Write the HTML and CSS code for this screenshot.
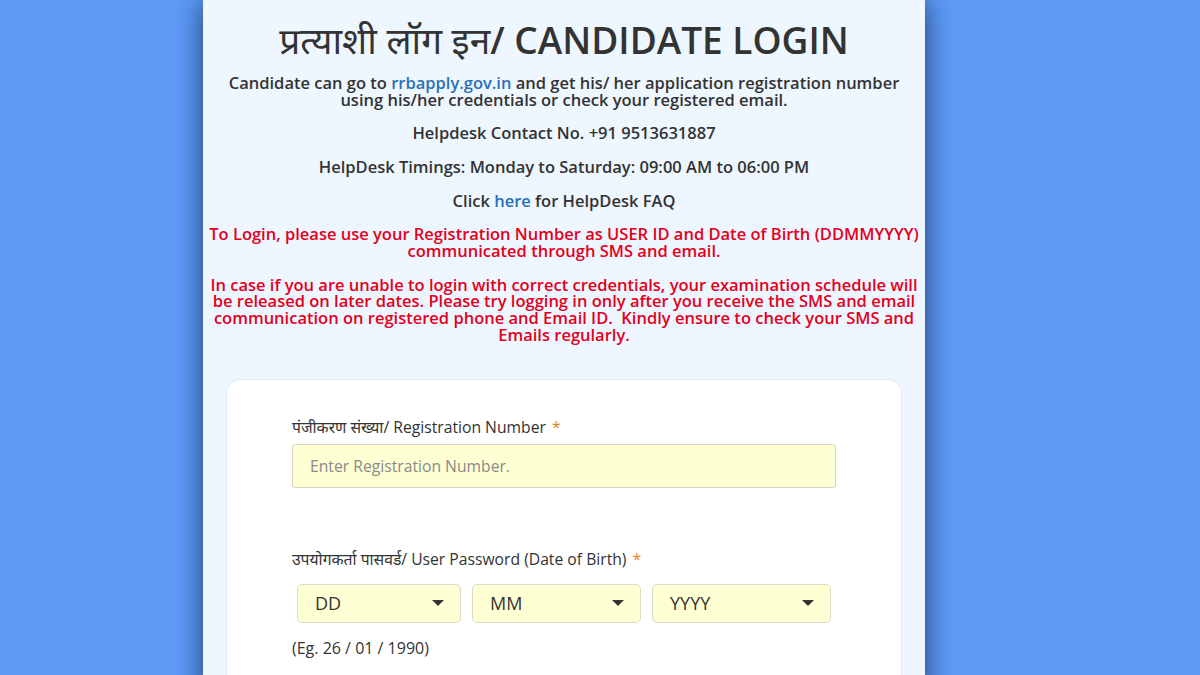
FILE: index.html
```html
<!DOCTYPE html>
<html lang="en">
<head>
<meta charset="utf-8">
<title>Candidate Login</title>
<link rel="stylesheet" href="styles.css">
</head>
<body>
<div class="stage">
  <main class="panel">
    <h1 class="title"><span class="hi">प्रत्याशी लॉग इन</span>/ CANDIDATE LOGIN</h1>
    <p class="info">Candidate can go to <a class="link" href="#">rrbapply.gov.in</a> and get his/ her application registration number<br>using his/her credentials or check your registered email.</p>
    <p class="info">Helpdesk Contact No. +91 9513631887</p>
    <p class="info">HelpDesk Timings: Monday to Saturday: 09:00 AM to 06:00 PM</p>
    <p class="info">Click <a class="link" href="#">here</a> for HelpDesk FAQ</p>
    <p class="warn">To Login, please use your Registration Number as USER ID and Date of Birth (DDMMYYYY)<br>communicated through SMS and email.</p>
    <p class="warn">In case if you are unable to login with correct credentials, your examination schedule will<br>be released on later dates. Please try logging in only after you receive the SMS and email<br>communication on registered phone and Email ID.&nbsp; Kindly ensure to check your SMS and<br>Emails regularly.</p>

    <section class="card">
      <div class="field">
        <label class="label">पंजीकरण संख्या/ Registration Number <span class="req">*</span></label>
        <div class="input">Enter Registration Number.</div>
      </div>
      <div class="field field-dob">
        <label class="label">उपयोगकर्ता पासवर्ड/ User Password (Date of Birth) <span class="req">*</span></label>
        <div class="selects">
          <div class="select sel-dd"><span>DD</span><span class="caret"></span></div>
          <div class="select sel-mm"><span>MM</span><span class="caret"></span></div>
          <div class="select sel-yy"><span>YYYY</span><span class="caret"></span></div>
        </div>
        <div class="hint">(Eg. 26 / 01 / 1990)</div>
      </div>
    </section>
  </main>
</div>
</body>
</html>
```

FILE: styles.css
```css
html, body {
  margin: 0;
  padding: 0;
}
body {
  background: #5f9cf8;
  font-family: "Open Sans", "Noto Sans", "Noto Sans Devanagari", sans-serif;
  color: #333;
  height: 675px;
  overflow: hidden;
}
.stage {
  padding-left: 203px;
}
.panel {
  width: 722px;
  height: 700px;
  background: #eef6ff;
  box-shadow: 0 0 28px rgba(10, 30, 70, 0.75);
  box-sizing: border-box;
  padding: 17px 4px 0;
  text-align: center;
}
.title {
  margin: 0 0 12px;
  font-size: 37px;
  line-height: 46px;
  font-weight: 600;
  color: #333;
}
.title .hi {
  font-weight: 400;
}
.info {
  margin: 0 0 16.8px;
  font-size: 16.5px;
  line-height: 16.8px;
  font-weight: 600;
  color: #333;
}
.link {
  color: #2a70b8;
  text-decoration: none;
}
.warn {
  margin: 0 0 16.8px;
  font-size: 16.5px;
  line-height: 16.8px;
  font-weight: 600;
  color: #e4001b;
}
.card {
  margin: 35px 19px 0 19px;
  background: #fff;
  border: 1px solid #e3e8ee;
  border-radius: 14px;
  padding: 37px 65px 0;
  height: 400px;
  text-align: left;
}
.field {
  display: flex;
  flex-direction: column;
}
.label {
  font-size: 15.7px;
  line-height: 20px;
  color: #333;
  margin-bottom: 7px;
}
.req {
  color: #e8822f;
  margin-left: 2px;
}
.input {
  height: 44px;
  box-sizing: border-box;
  border: 1px solid #d4d4c0;
  border-radius: 3px;
  background: #ffffd4;
  color: #8a8a8a;
  font-size: 15.7px;
  line-height: 42px;
  padding: 0 17px;
}
.field-dob {
  margin-top: 61px;
}
.field-dob .label {
  margin-bottom: 15px;
}
.selects {
  display: flex;
  gap: 11px;
  padding-left: 5px;
}
.select {
  height: 39px;
  box-sizing: border-box;
  border: 1px solid #dcdcc4;
  border-radius: 5px;
  background: #ffffd4;
  display: flex;
  align-items: center;
  justify-content: space-between;
  padding: 0 16px 0 17px;
  font-size: 18px;
  color: #333;
}
.sel-dd { width: 164px; }
.sel-mm { width: 169px; }
.sel-yy { width: 179px; }
.caret {
  width: 0;
  height: 0;
  border-left: 6px solid transparent;
  border-right: 6px solid transparent;
  border-top: 6px solid #333;
}
.hint {
  margin-top: 15px;
  font-size: 16px;
  line-height: 20px;
  color: #333;
}
```
